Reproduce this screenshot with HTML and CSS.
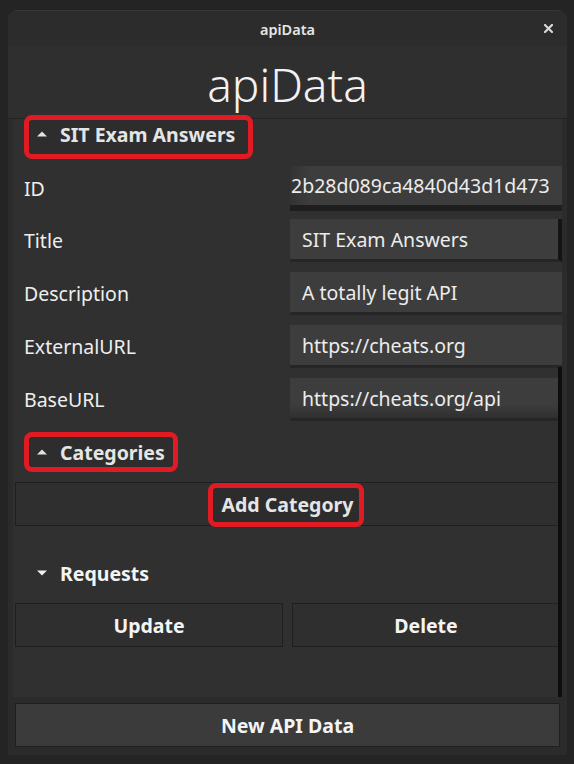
FILE: index.html
```html
<!DOCTYPE html>
<html>
<head>
<meta charset="utf-8">
<link rel="stylesheet" href="styles.css">
</head>
<body>
<div class="window">
  <div class="titlebar">
    <span class="wtitle">apiData</span>
    <span class="close"><svg width="9" height="9" viewBox="0 0 9 9"><path d="M1 1L8 8M8 1L1 8" stroke="#d8d8d8" stroke-width="2.2" stroke-linecap="square"/></svg></span>
  </div>
  <div class="body">
    <div class="header"><h1 class="big">apiData</h1></div>
    <div class="scroll">
      <div class="exp-head mark mark-sit">
        <svg class="tri" width="10" height="6" viewBox="0 0 10 6"><path d="M0 5.5L5 0.5L10 5.5Z" fill="#f0f0f0"/></svg>
        <span class="exp-label">SIT Exam Answers</span>
      </div>
      <div class="fields">
        <div class="row"><span class="label">ID</span><div class="input input-id"><span class="val">2b28d089ca4840d43d1d473</span></div></div>
        <div class="row"><span class="label">Title</span><div class="input input-edge"><span class="val">SIT Exam Answers</span></div></div>
        <div class="row"><span class="label">Description</span><div class="input"><span class="val">A totally legit API</span></div></div>
        <div class="row"><span class="label">ExternalURL</span><div class="input"><span class="val">https://cheats.org</span></div></div>
        <div class="row"><span class="label">BaseURL</span><div class="input input-shade"><span class="val">https://cheats.org/api</span></div></div>
      </div>
      <div class="exp-head mark mark-cat cat-head">
        <svg class="tri" width="10" height="6" viewBox="0 0 10 6"><path d="M0 5.5L5 0.5L10 5.5Z" fill="#f0f0f0"/></svg>
        <span class="exp-label">Categories</span>
      </div>
      <button class="btn add-btn"><span class="mark mark-add">Add Category</span></button>
      <div class="exp-head req-head">
        <svg class="tri" width="10" height="6" viewBox="0 0 10 6"><path d="M0 0.5L5 5.5L10 0.5Z" fill="#f0f0f0"/></svg>
        <span class="exp-label">Requests</span>
      </div>
      <div class="btn-row">
        <button class="btn">Update</button>
        <button class="btn">Delete</button>
      </div>
      <div class="scrollbar"></div>
    </div>
    <div class="footer">
      <button class="btn new-btn">New API Data</button>
    </div>
  </div>
</div>
</body>
</html>
```

FILE: styles.css
```css
html, body {
  margin: 0;
  padding: 0;
  background: #242424;
  font-family: "Noto Sans", "Open Sans", sans-serif;
  color: #f0f0f0;
}
.window {
  margin: 10px 0 0 8px;
  width: 559px;
  height: 745px;
  border-radius: 9px 9px 0 0;
  background: #2b2b2b;
  display: flex;
  flex-direction: column;
  overflow: hidden;
}
.titlebar {
  height: 36px;
  flex: none;
  display: flex;
  align-items: center;
  justify-content: center;
  position: relative;
  background: #2c2c2c;
  border-top: 1px solid #383838;
  box-sizing: border-box;
}
.wtitle {
  font-size: 14.5px;
  font-weight: 600;
  color: #e6e6e6;
}
.close {
  position: absolute;
  right: 14px;
  top: 13px;
  width: 9px;
  height: 9px;
  display: flex;
}
.body {
  flex: 1;
  display: flex;
  flex-direction: column;
  padding: 0 5px 8px 5px;
  background: #2b2b2b;
  min-height: 0;
}
.header {
  height: 72px;
  flex: none;
  margin: 0 -5px;
  background: #2f2f2f;
  border-bottom: 1px solid #232323;
  display: flex;
  justify-content: center;
  align-items: center;
}
.big {
  margin: 3px 0 0 0;
  font-size: 46px;
  font-weight: 300;
  color: #f2f2f2;
  line-height: 1;
}
.scroll {
  flex: 1;
  position: relative;
  background: #303030;
  display: flex;
  flex-direction: column;
  min-height: 0;
}
.exp-head {
  height: 30px;
  display: flex;
  align-items: center;
  align-self: flex-start;
  margin-left: 11px;
  padding-left: 13px;
  gap: 13px;
  position: relative;
}
.exp-label {
  font-size: 19.5px;
  font-weight: 700;
  color: #f4f4f4;
}
.tri {
  display: block;
  flex: none;
}
.mark::after {
  content: "";
  position: absolute;
  border: 5px solid #e01b24;
  border-radius: 8px;
  background: rgba(0, 0, 0, 0.06);
  pointer-events: none;
}
.mark-sit::after {
  left: 0;
  right: -18px;
  top: -4px;
  bottom: -10px;
}
.mark-cat::after {
  left: 0;
  right: -13px;
  top: -5px;
  bottom: -5px;
}
.mark-add {
  position: relative;
}
.mark-add::after {
  left: -14px;
  right: -11px;
  top: -8px;
  bottom: -9px;
}
.fields {
  margin-top: 17px;
  display: flex;
  flex-direction: column;
  gap: 10px;
}
.row {
  display: grid;
  grid-template-columns: 277px 272px;
  align-items: center;
  height: 43px;
}
.label {
  padding-left: 11px;
  font-size: 19.5px;
  color: #eeeeee;
}
.input {
  height: 43px;
  box-sizing: border-box;
  background: #3d3d3d;
  border-bottom: 3px solid #262626;
  display: flex;
  align-items: center;
  padding-left: 12px;
  overflow: hidden;
  white-space: nowrap;
}
.val {
  font-size: 19.5px;
  color: #ececec;
}
.input-id {
  padding-left: 1px;
  background: linear-gradient(to right, #333333 0, #3d3d3d 20px);
  border-bottom: 6px solid #1e1e1e;
  height: 45px;
}
.input-edge {
  border-right: 4px solid #141414;
}
.input-shade {
  background: linear-gradient(to bottom, #3d3d3d 0, #3d3d3d 65%, #2f2f2f 100%);
}
.cat-head {
  margin-top: 16px;
}
.btn {
  font-family: "Noto Sans", "Open Sans", sans-serif;
  font-size: 19.5px;
  font-weight: 700;
  color: #f4f4f4;
  background: #2f2f2f;
  border: 1px solid #1f1f1f;
  height: 44px;
  padding: 0;
  display: flex;
  align-items: center;
  justify-content: center;
}
.add-btn {
  margin: 15px 2px 0 2px;
}
.req-head {
  margin-top: 32px;
}
.btn-row {
  margin: 15px 2px 0 2px;
  display: grid;
  grid-template-columns: 268px 268px;
  gap: 9px;
}
.scrollbar {
  position: absolute;
  right: 0;
  top: 248px;
  width: 4px;
  height: 330px;
  background: #0d0d0d;
}
.footer {
  flex: none;
  padding-top: 6px;
  background: #2b2b2b;
}
.new-btn {
  width: 545px;
  margin: 0 2px;
  background: #3b3b3b;
  border: 1px solid #1f1f1f;
}
```
